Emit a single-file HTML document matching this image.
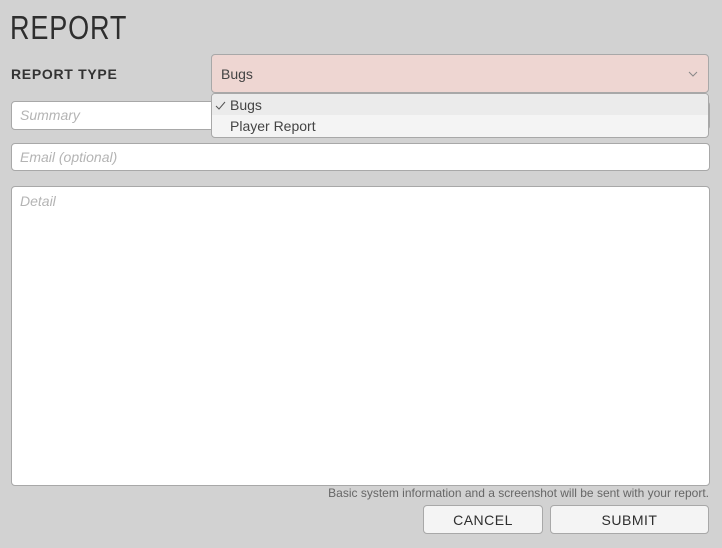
<!DOCTYPE html>
<html><head><style>
body{margin:0;width:722px;height:548px;background:#d2d2d2;position:relative;overflow:hidden;font-family:"Liberation Sans",sans-serif}
.a{position:absolute;box-sizing:border-box}
.f{background:#fff;border:1px solid #a8a8a8;border-radius:4px;color:#b4b4b4;font-style:italic;font-size:14px;padding-left:8px}
.btn{background:#f4f4f4;border:1px solid #a8a8a8;border-radius:4px;color:#2e2e2e;font-size:14px;letter-spacing:0.5px;text-align:center;line-height:29px}
</style></head><body>
<div class="a" style="left:10px;top:9px;font-size:33px;color:#2e2e2e;letter-spacing:1px;transform:scaleX(0.82);transform-origin:0 0">REPORT</div>
<div class="a" style="left:11px;top:66px;font-size:14px;font-weight:bold;color:#333;letter-spacing:0.7px">REPORT TYPE</div>
<div class="a f" style="left:11px;top:101px;width:699px;height:29px;line-height:27px">Summary</div>
<div class="a f" style="left:11px;top:143px;width:699px;height:28px;line-height:26px">Email (optional)</div>
<div class="a f" style="left:11px;top:186px;width:699px;height:300px;padding-top:6px">Detail</div>
<div class="a" style="left:211px;top:54px;width:498px;height:39px;background:#eed6d2;border:1px solid #a8a8a8;border-radius:4px;font-size:14px;color:#444;padding-left:9px;line-height:38px">Bugs
<svg style="position:absolute;right:10px;top:16px" width="10" height="7"><path d="M1 1L5 5L9 1" stroke="#888" fill="none"/></svg></div>
<div class="a" style="left:211px;top:93px;width:498px;height:45px;background:#f4f4f4;border:1px solid #a8a8a8;border-radius:4px;overflow:hidden;font-size:14px;color:#444">
<div style="height:21px;background:#ebebeb;line-height:23px;padding-left:18px;position:relative">Bugs<svg style="position:absolute;left:3px;top:7px" width="11" height="10"><path d="M1 5L4 8L10 1" stroke="#555" fill="none"/></svg></div>
<div style="height:22px;line-height:22px;padding-left:18px">Player Report</div></div>
<div class="a" style="right:13px;top:486px;font-size:12px;color:#666">Basic system information and a screenshot will be sent with your report.</div>
<div class="a btn" style="left:423px;top:505px;width:120px;height:29px">CANCEL</div>
<div class="a btn" style="left:550px;top:505px;width:159px;height:29px">SUBMIT</div>
</body></html>
